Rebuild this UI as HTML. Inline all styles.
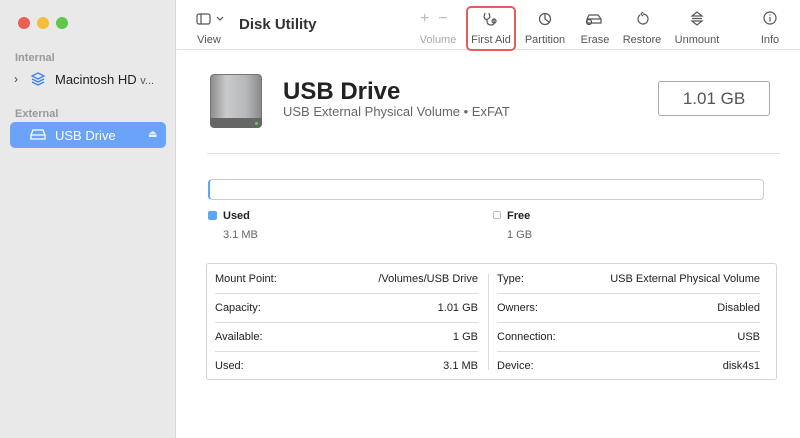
<!DOCTYPE html><html><head><style>
*{margin:0;padding:0;box-sizing:border-box}
body{width:800px;height:438px;overflow:hidden;background:#fff;font-family:"Liberation Sans",sans-serif;position:relative;color:#222}
.a{position:absolute;white-space:nowrap}
.side{left:0;top:0;width:176px;height:438px;background:#e9e9e9;border-right:1px solid #d6d6d6}
.dot{width:12px;height:12px;border-radius:50%;top:17px}
.sec{font-size:11px;color:#999;font-weight:bold}
.tl{font-size:11px;color:#555;top:34px;transform:translateX(-50%)}
.ic{top:10px;transform:translateX(-50%)}
.row{position:absolute;height:29px;border-bottom:1px solid #ddd;font-size:11px;line-height:29px}
.row span:last-child{float:right}
</style></head><body>
<div class="a side"></div>
<div class="a dot" style="left:18px;background:#ec5f57"></div>
<div class="a dot" style="left:37px;background:#f4bd40"></div>
<div class="a dot" style="left:56px;background:#5ec84b"></div>
<div class="a sec" style="left:15px;top:52px">Internal</div>
<div class="a" style="left:14px;top:72px;font-size:12px;color:#444">›</div>
<svg class="a" style="left:30px;top:71px" width="16" height="16" viewBox="0 0 16 16" fill="none" stroke="#3b82f6" stroke-width="1.3"><path d="M8 2l6 3-6 3-6-3z M2 8l6 3 6-3 M2 11l6 3 6-3"/></svg>
<div class="a" style="left:55px;top:72px;font-size:13px">Macintosh HD <span style="font-size:11px;color:#555">v...</span></div>
<div class="a sec" style="left:15px;top:108px">External</div>
<div class="a" style="left:10px;top:122px;width:156px;height:26px;background:#6aa3f7;border-radius:5px"></div>
<svg class="a" style="left:30px;top:129px" width="16" height="12" viewBox="0 0 16 12" fill="none" stroke="#fff" stroke-width="1.3"><path d="M3 1h10l2 5v4H1V6z M1 6h14"/></svg>
<div class="a" style="left:55px;top:128px;font-size:13px;color:#fff">USB Drive</div>
<div class="a" style="left:148px;top:129px;font-size:10px;color:#e8f0ff">⏏</div>
<div class="a" style="left:177px;top:49px;width:623px;height:1px;background:#e2e2e2"></div>
<svg class="a" style="left:196px;top:13px" width="28" height="12" viewBox="0 0 28 12" fill="none" stroke="#555" stroke-width="1.2"><rect x="1" y="1" width="13" height="10" rx="2"/><path d="M5 1v10M21 4l3 3 3-3"/></svg>
<div class="a tl" style="left:209px">View</div>
<div class="a" style="left:239px;top:16px;font-size:15px;font-weight:bold;color:#333">Disk Utility</div>
<div class="a" style="left:420px;top:10px;font-size:16px;color:#bbb">+ &nbsp;−</div>
<div class="a tl" style="left:438px;color:#aaa">Volume</div>
<div class="a" style="left:466px;top:6px;width:50px;height:45px;border:2px solid #e25e5e;border-radius:5px"></div>
<svg class="a" style="left:482px;top:11px" width="18" height="16" viewBox="0 0 18 16" fill="none" stroke="#555" stroke-width="1.2"><path d="M3 2L2 6q2 5 6 0L7 2 M5 8v2q0 4 4 4t3-4v-2 M12 8a2 2 0 1 0 .1 0"/></svg>
<div class="a tl" style="left:491px">First Aid</div>
<svg class="a" style="left:538px;top:12px" width="14" height="14" viewBox="0 0 14 14" fill="none" stroke="#555" stroke-width="1.2"><circle cx="7" cy="7" r="5.5"/><path d="M7 1.5V7l4 3"/></svg>
<div class="a tl" style="left:545px">Partition</div>
<svg class="a" style="left:585px;top:13px" width="18" height="12" viewBox="0 0 18 12" fill="none" stroke="#555" stroke-width="1.2"><path d="M4 2h9l3 4v4H2V6z M2 6h14"/><circle cx="4" cy="9" r="2.5"/></svg>
<div class="a tl" style="left:595px">Erase</div>
<svg class="a" style="left:636px;top:11px" width="14" height="15" viewBox="0 0 14 15" fill="none" stroke="#555" stroke-width="1.2"><path d="M4 4a5 5 0 1 0 3-1 M7 1l-2 2 2 2"/></svg>
<div class="a tl" style="left:642px">Restore</div>
<svg class="a" style="left:690px;top:11px" width="14" height="15" viewBox="0 0 14 15" fill="none" stroke="#555" stroke-width="1.2"><path d="M7 1L2 5h10z M2 7.5h10 M7 14l-5-4h10z"/></svg>
<div class="a tl" style="left:697px">Unmount</div>
<svg class="a" style="left:763px;top:11px" width="14" height="14" viewBox="0 0 14 14" fill="none" stroke="#555" stroke-width="1.2"><circle cx="7" cy="7" r="6"/><path d="M7 6v4.5M7 3.5v1"/></svg>
<div class="a tl" style="left:770px">Info</div>
<div class="a" style="left:210px;top:74px;width:52px;height:54px;border-radius:4px;background:linear-gradient(90deg,#8d8d8d,#c8cacb 30%,#b6b8b9 70%,#8a8a8a);border:1px solid #777"></div>
<div class="a" style="left:210px;top:118px;width:52px;height:10px;border-radius:0 0 5px 5px;background:#666"></div>
<div class="a" style="left:255px;top:122px;width:3px;height:3px;border-radius:50%;background:#6c6"></div>
<div class="a" style="left:283px;top:78px;font-size:24px;font-weight:bold;color:#222">USB Drive</div>
<div class="a" style="left:283px;top:104px;font-size:13px;color:#666">USB External Physical Volume • ExFAT</div>
<div class="a" style="left:658px;top:81px;width:112px;height:35px;border:1px solid #aaa;border-radius:3px;font-size:17px;color:#555;text-align:center;line-height:34px">1.01 GB</div>
<div class="a" style="left:207px;top:153px;width:573px;height:1px;background:#e2e2e2"></div>
<div class="a" style="left:208px;top:179px;width:556px;height:21px;border:1px solid #ccc;border-left:2px solid #5da5f5;border-radius:4px"></div>
<div class="a" style="left:208px;top:211px;width:9px;height:9px;border-radius:2px;background:#5da5f5"></div>
<div class="a" style="left:223px;top:210px;font-size:11px;font-weight:bold">Used</div>
<div class="a" style="left:223px;top:229px;font-size:11px;color:#666">3.1 MB</div>
<div class="a" style="left:493px;top:211px;width:8px;height:8px;border-radius:2px;border:1px solid #bbb"></div>
<div class="a" style="left:507px;top:210px;font-size:11px;font-weight:bold">Free</div>
<div class="a" style="left:507px;top:229px;font-size:11px;color:#666">1 GB</div>
<div class="a" style="left:206px;top:263px;width:571px;height:117px;border:1px solid #d4d4d4;border-radius:3px"></div>
<div class="a" style="left:488px;top:274px;width:1px;height:96px;background:#ddd"></div>
<div class="row" style="left:215px;top:265px;width:263px"><span>Mount Point:</span><span>/Volumes/USB Drive</span></div>
<div class="row" style="left:215px;top:294px;width:263px"><span>Capacity:</span><span>1.01 GB</span></div>
<div class="row" style="left:215px;top:323px;width:263px"><span>Available:</span><span>1 GB</span></div>
<div class="row" style="left:215px;top:352px;width:263px;border:none"><span>Used:</span><span>3.1 MB</span></div>
<div class="row" style="left:497px;top:265px;width:263px"><span>Type:</span><span>USB External Physical Volume</span></div>
<div class="row" style="left:497px;top:294px;width:263px"><span>Owners:</span><span>Disabled</span></div>
<div class="row" style="left:497px;top:323px;width:263px"><span>Connection:</span><span>USB</span></div>
<div class="row" style="left:497px;top:352px;width:263px;border:none"><span>Device:</span><span>disk4s1</span></div>
</body></html>
